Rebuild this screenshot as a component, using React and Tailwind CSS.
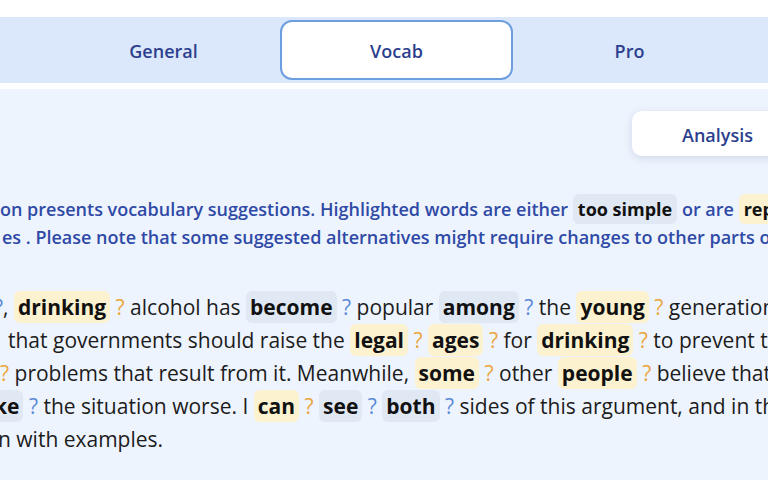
import React from "react";

const Y = ({ children }) => (
  <span className="rounded-[6px] bg-[#fcf2cf] px-[4px] py-[2px] font-bold text-[#111]">{children}</span>
);
const B = ({ children }) => (
  <span className="rounded-[6px] bg-[#e0e8f4] px-[4px] py-[2px] font-bold text-[#111]">{children}</span>
);
const QY = () => <span className="text-[#eaa640]">?</span>;
const QB = () => <span className="text-[#5a8ad6]">?</span>;

const Line = ({ ml, children }) => (
  <div className="h-[33px] leading-[33px] whitespace-nowrap" style={{ marginLeft: ml }}>
    {children}
  </div>
);

export default function App() {
  return (
    <div
      className="w-[768px] h-[480px] overflow-hidden bg-white flex flex-col"
      style={{ fontFamily: '"Open Sans", "Noto Sans", sans-serif' }}
    >
      {/* tabs */}
      <div className="mt-[17px] h-[66px] shrink-0 bg-[#dbe8fb] flex items-center pt-[2px]">
        <div className="ml-[47px] w-[233px] text-center text-[18px] font-semibold text-[#2c3f8e]">General</div>
        <div className="w-[233px] h-[60px] -mt-[2px] rounded-[12px] border-2 border-[#6d9fe0] bg-white flex items-center justify-center pt-[2px] text-[18px] font-semibold text-[#2c3f8e]">
          Vocab
        </div>
        <div className="w-[233px] text-center text-[18px] font-semibold text-[#2c3f8e]">Pro</div>
      </div>

      {/* content */}
      <div className="mt-[6px] flex-1 bg-[#eef4fd] overflow-hidden">
        <div className="mt-[22px] ml-[632px] w-[170px] h-[45px] rounded-[10px] bg-white shadow-[0_2px_8px_rgba(60,90,150,0.18)] flex items-center pl-[50px] pt-[3px] text-[18px] font-semibold text-[#2c3f8e]">
          Analysis
        </div>

        <div className="mt-[39px] text-[18px] font-semibold text-[#2f4aa6]">
          <div className="h-[28px] leading-[28px] whitespace-nowrap" style={{ marginLeft: 0 }}>
            on presents vocabulary suggestions. Highlighted words are either{" "}
            <span className="rounded-[6px] bg-[#e0e8f4] px-[5px] py-[3px] font-bold text-[#111]">too simple</span>{" "}
            or are{" "}
            <span className="rounded-[6px] bg-[#fcf2cf] px-[5px] py-[3px] font-bold text-[#111]">repetitive</span>
          </div>
          <div className="h-[28px] leading-[28px] whitespace-nowrap" style={{ marginLeft: 2 }}>
            es . Please note that some suggested alternatives might require changes to other parts of the essay.
          </div>
        </div>

        <div className="mt-[40px] text-[21px] text-[#1c1c1c]">
          <Line ml={-6}>
            <QB />, <Y>drinking</Y> <QY /> alcohol has <B>become</B> <QB /> popular <B>among</B> <QB /> the{" "}
            <Y>young</Y> <QY /> generation
          </Line>
          <Line ml={8}>
            {" "}that governments should raise the <Y>legal</Y> <QY /> <Y>ages</Y> <QY /> for <Y>drinking</Y> <QY /> to
            prevent the
          </Line>
          <Line ml={0}>
            <QY /> problems that result from it. Meanwhile, <Y>some</Y> <QY /> other <Y>people</Y> <QY /> believe that
            it
          </Line>
          <Line ml={-10}>
            <B>ke</B> <QB /> the situation worse. I <Y>can</Y> <QY /> <B>see</B> <QB /> <B>both</B> <QB /> sides of this
            argument, and in this
          </Line>
          <Line ml={-2}>n with examples.</Line>
        </div>
      </div>
    </div>
  );
}
